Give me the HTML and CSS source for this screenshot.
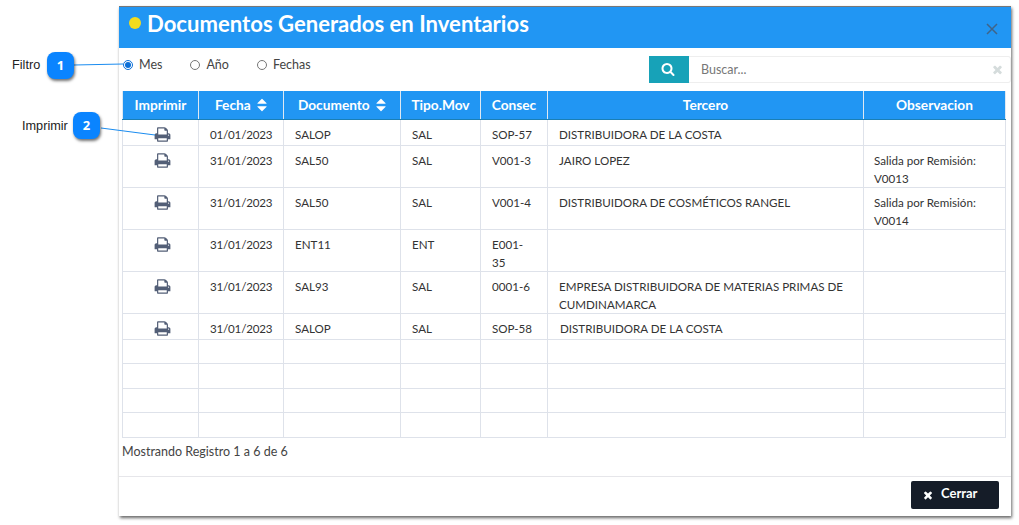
FILE: index.html
```html
<!DOCTYPE html>
<html lang="es">
<head>
<meta charset="utf-8">
<title>Documentos Generados en Inventarios</title>
<link rel="stylesheet" href="styles.css">
</head>
<body>
<svg class="defs" width="0" height="0" aria-hidden="true">
  <symbol id="i-print" viewBox="0 0 1792 1792"><path d="M448 1536h896v-256h-896v256zm0-640h896v-384h-160q-40 0-68-28t-28-68v-160h-640v640zm1152 64q0-26-19-45t-45-19-45 19-19 45 19 45 45 19 45-19 19-45zm128 0v416q0 13-9.5 22.5t-22.5 9.5h-224v160q0 40-28 68t-68 28h-960q-40 0-68-28t-28-68v-160h-224q-13 0-22.5-9.5t-9.5-22.5v-416q0-79 56.5-135.5t135.5-56.5h64v-544q0-40 28-68t68-28h672q40 0 88 20t76 48l152 152q28 28 48 76t20 88v256h64q79 0 135.5 56.5t56.5 135.5z"/></symbol>
  <symbol id="i-search" viewBox="0 0 1792 1792"><path d="M1216 832q0-185-131.5-316.5t-316.5-131.5-316.5 131.5-131.5 316.5 131.5 316.5 316.5 131.5 316.5-131.5 131.5-316.5zm512 832q0 52-38 90t-90 38q-54 0-90-38l-343-342q-179 124-399 124-143 0-273.5-55.5t-225-150-150-225-55.5-273.5 55.5-273.5 150-225 225-150 273.5-55.5 273.5 55.5 225 150 150 225 55.5 273.5q0 220-124 399l343 343q37 37 37 90z"/></symbol>
  <symbol id="i-times" viewBox="0 0 1792 1792"><path d="M1490 1322q0 40-28 68l-136 136q-28 28-68 28t-68-28l-294-294-294 294q-28 28-68 28t-68-28l-136-136q-28-28-28-68t28-68l294-294-294-294q-28-28-28-68t28-68l136-136q28-28 68-28t68 28l294 294 294-294q28-28 68-28t68 28l136 136q28 28 28 68t-28 68l-294 294 294 294q28 28 28 68z"/></symbol>
  <symbol id="i-sort" viewBox="0 0 1792 1792"><path d="M1408 1088q0 26-19 45l-448 448q-19 19-45 19t-45-19l-448-448q-19-19-19-45t19-45 45-19h896q26 0 45 19t19 45zm0-384q0 26-19 45t-45 19h-896q-26 0-45-19t-19-45 19-45l448-448q19-19 45-19t45 19l448 448q19 19 19 45z"/></symbol>
</svg>

<main class="modal">
  <header class="modal-head">
    <span class="dot"></span>
    <h1 class="modal-title">Documentos Generados en Inventarios</h1>
    <span class="close">
      <svg viewBox="0 0 12 12" class="close-icon"><path d="M1 1l10 10M11 1L1 11"/></svg>
    </span>
  </header>

  <section class="toolbar">
    <div class="radios">
      <label class="radio"><input type="radio" name="p" checked> Mes</label>
      <label class="radio"><input type="radio" name="p"> Año</label>
      <label class="radio"><input type="radio" name="p"> Fechas</label>
    </div>
    <div class="search">
      <button class="search-btn" type="button"><svg class="ic-search"><use href="#i-search"/></svg></button>
      <div class="search-field">
        <span class="placeholder">Buscar...</span>
        <svg class="ic-clear"><use href="#i-times"/></svg>
      </div>
    </div>
  </section>

  <table class="grid">
    <colgroup>
      <col class="c1"><col class="c2"><col class="c3"><col class="c4"><col class="c5"><col class="c6"><col class="c7">
    </colgroup>
    <thead>
      <tr>
        <th>Imprimir</th>
        <th class="sortable">Fecha <svg class="ic-sort"><use href="#i-sort"/></svg></th>
        <th class="sortable">Documento <svg class="ic-sort"><use href="#i-sort"/></svg></th>
        <th>Tipo.Mov</th>
        <th>Consec</th>
        <th>Tercero</th>
        <th>Observacion</th>
      </tr>
    </thead>
    <tbody>
      <tr class="r1">
        <td class="pr"><svg class="ic-print"><use href="#i-print"/></svg></td>
        <td class="date">01/01/2023</td><td>SALOP</td><td>SAL</td><td>SOP-57</td><td>DISTRIBUIDORA DE LA COSTA</td><td></td>
      </tr>
      <tr>
        <td class="pr"><svg class="ic-print"><use href="#i-print"/></svg></td>
        <td class="date">31/01/2023</td><td>SAL50</td><td>SAL</td><td>V001-3</td><td>JAIRO LOPEZ</td><td><span class="two">Salida por Remisión: V0013</span></td>
      </tr>
      <tr>
        <td class="pr"><svg class="ic-print"><use href="#i-print"/></svg></td>
        <td class="date">31/01/2023</td><td>SAL50</td><td>SAL</td><td>V001-4</td><td>DISTRIBUIDORA DE COSMÉTICOS RANGEL</td><td><span class="two">Salida por Remisión: V0014</span></td>
      </tr>
      <tr>
        <td class="pr"><svg class="ic-print"><use href="#i-print"/></svg></td>
        <td class="date">31/01/2023</td><td>ENT11</td><td>ENT</td><td><span class="two">E001-35</span></td><td></td><td></td>
      </tr>
      <tr>
        <td class="pr"><svg class="ic-print"><use href="#i-print"/></svg></td>
        <td class="date">31/01/2023</td><td>SAL93</td><td>SAL</td><td>0001-6</td><td><span class="two">EMPRESA DISTRIBUIDORA DE MATERIAS PRIMAS DE CUMDINAMARCA</span></td><td></td>
      </tr>
      <tr class="r6">
        <td class="pr"><svg class="ic-print"><use href="#i-print"/></svg></td>
        <td class="date">31/01/2023</td><td>SALOP</td><td>SAL</td><td>SOP-58</td><td class="indent">DISTRIBUIDORA DE LA COSTA</td><td></td>
      </tr>
      <tr class="empty"><td></td><td></td><td></td><td></td><td></td><td></td><td></td></tr>
      <tr class="empty"><td></td><td></td><td></td><td></td><td></td><td></td><td></td></tr>
      <tr class="empty"><td></td><td></td><td></td><td></td><td></td><td></td><td></td></tr>
      <tr class="empty"><td></td><td></td><td></td><td></td><td></td><td></td><td></td></tr>
    </tbody>
  </table>

  <p class="count">Mostrando Registro 1 a 6 de 6</p>

  <footer class="modal-foot">
    <button class="btn-close" type="button"><svg class="ic-x"><use href="#i-times"/></svg>Cerrar</button>
  </footer>
</main>

<svg class="leaders" width="1019" height="525" aria-hidden="true">
  <path d="M74 65L123 64M101 128L155 135"/>
</svg>
<span class="note note-1">Filtro</span>
<span class="badge badge-1">1</span>
<span class="note note-2">Imprimir</span>
<span class="badge badge-2">2</span>
</body>
</html>
```

FILE: styles.css
```css
* { box-sizing: border-box; }
html, body { margin: 0; padding: 0; background: #fff; }
body {
  position: relative;
  width: 1019px;
  height: 525px;
  overflow: hidden;
  font-family: Lato, sans-serif;
  color: #333;
  padding: 6px 0 0 119px;
}
.defs { position: absolute; }

.modal {
  width: 892px;
  height: 510px;
  background: #fff;
  border-top: 1px solid #777;
  box-shadow: 1px 2px 3px rgba(0, 0, 0, 0.6);
  display: flex;
  flex-direction: column;
}
.modal-head {
  height: 41px;
  background: #2196f3;
  display: flex;
  align-items: flex-start;
  padding: 0 13px 0 10px;
  flex: none;
}
.dot {
  width: 12px;
  height: 12px;
  margin-top: 10px;
  margin-right: 6px;
  border-radius: 50%;
  background: #f2dc1f;
  flex: none;
}
.modal-title {
  margin: 0;
  font-size: 22.1px;
  line-height: 34px;
  font-weight: 700;
  color: #fff;
  flex: 1;
}
.close { margin-top: 16px; display: flex; }
.close-icon { width: 12px; height: 12px; fill: none; stroke: #3f6488; stroke-width: 1.5; }

.toolbar {
  height: 43px;
  display: flex;
  justify-content: space-between;
  flex: none;
  padding-top: 8px;
}
.radios { display: flex; padding: 1px 0 0 4px; gap: 28px; }
.radio {
  display: flex;
  align-items: flex-start;
  font-size: 12.5px;
  line-height: 16px;
  color: #444;
  gap: 6px;
  height: 16px;
}
.radio input { margin: 3px 0 0 0; width: 10px; height: 10px; accent-color: #0a6fd8; }

.search { display: flex; height: 27px; width: 362px; }
.search-btn {
  width: 40px;
  height: 27px;
  border: 0;
  padding: 0 3px 2px 0;
  background: #17a2b8;
  display: flex;
  align-items: center;
  justify-content: center;
}
.ic-search { width: 14px; height: 14px; fill: #fff; }
.search-field {
  flex: 1;
  border: 1px solid #eee;
  border-left: 0;
  display: flex;
  align-items: center;
  justify-content: space-between;
  padding: 0 6px 0 12px;
  border-radius: 0 3px 3px 0;
}
.placeholder { font-size: 12.5px; color: #777; }
.ic-clear { width: 13px; height: 13px; fill: #d5dcdc; }

.grid {
  margin-left: 3px;
  width: 884px;
  table-layout: fixed;
  border-collapse: collapse;
  flex: none;
  font-size: 11.6px;
  color: #333;
}
.c1 { width: 76px; }
.c2 { width: 85px; }
.c3 { width: 117px; }
.c4 { width: 80px; }
.c5 { width: 67px; }
.c6 { width: 316px; }
.c7 { width: 142px; }
.grid th {
  height: 28px;
  padding: 0;
  background: #2196f3;
  color: #fff;
  font-size: 13.7px;
  font-weight: 700;
  text-align: center;
  border-left: 1px solid #dfe9f2;
  border-right: 1px solid #dfe9f2;
  border-bottom: 1px solid #1a7fb5;
}
.grid th.sortable { padding-left: 3px; }
.ic-sort { width: 16px; height: 16px; fill: #fff; vertical-align: -3px; }
.grid td {
  border: 1px solid #dee2ea;
  padding: 6px 12px 0 11px;
  line-height: 18px;
  vertical-align: top;
}
.grid td:last-child { padding-left: 10px; }
.grid td.pr { padding: 6px 0 0 4px; }
.grid td.indent { padding-left: 12px; }
.grid td.date { letter-spacing: -0.2px; }
.two { display: block; margin-bottom: -1px; }
.r1 td { height: 26px; }
.r6 td { height: 26px; }
.empty td { height: 24.6px; padding: 0; }
.ic-print { width: 17px; height: 17px; fill: #535f77; display: block; margin: 0 auto; }

.count {
  margin: 0 0 0 3px;
  font-size: 12.5px;
  line-height: 16px;
  color: #444;
  padding-top: 6px;
  height: 38px;
  flex: none;
}
.modal-foot {
  flex: 1;
  border-top: 1px solid #e6e6ea;
  display: flex;
  justify-content: flex-end;
  align-items: flex-start;
  padding: 4px 12px 0 0;
}
.btn-close {
  width: 88px;
  height: 28px;
  background: #151c28;
  color: #fff;
  border: 0;
  border-radius: 2px;
  font-family: inherit;
  font-size: 13px;
  font-weight: 700;
  padding: 0 0 3px 11px;
  display: flex;
  align-items: center;
  gap: 7px;
}
.ic-x { width: 12px; height: 12px; fill: #fff; margin-top: 3px; }

.leaders { position: absolute; left: 0; top: 0; pointer-events: none; }
.leaders path { stroke: #1a8cf0; stroke-width: 1; fill: none; }
.badge {
  position: absolute;
  width: 27px;
  height: 27px;
  border-radius: 8px;
  background: #0a84ff;
  color: #fff;
  font: 700 13px/27px "Open Sans", sans-serif;
  text-align: center;
  box-shadow: 1px 2px 3px rgba(0, 0, 0, 0.55);
}
.badge-1 { left: 47px; top: 52px; }
.badge-2 { left: 73px; top: 112px; }
.note {
  position: absolute;
  font: 12.7px/16px "Liberation Sans", sans-serif;
  color: #222;
}
.note-1 { left: 12px; top: 57px; }
.note-2 { left: 22px; top: 118px; }
```
